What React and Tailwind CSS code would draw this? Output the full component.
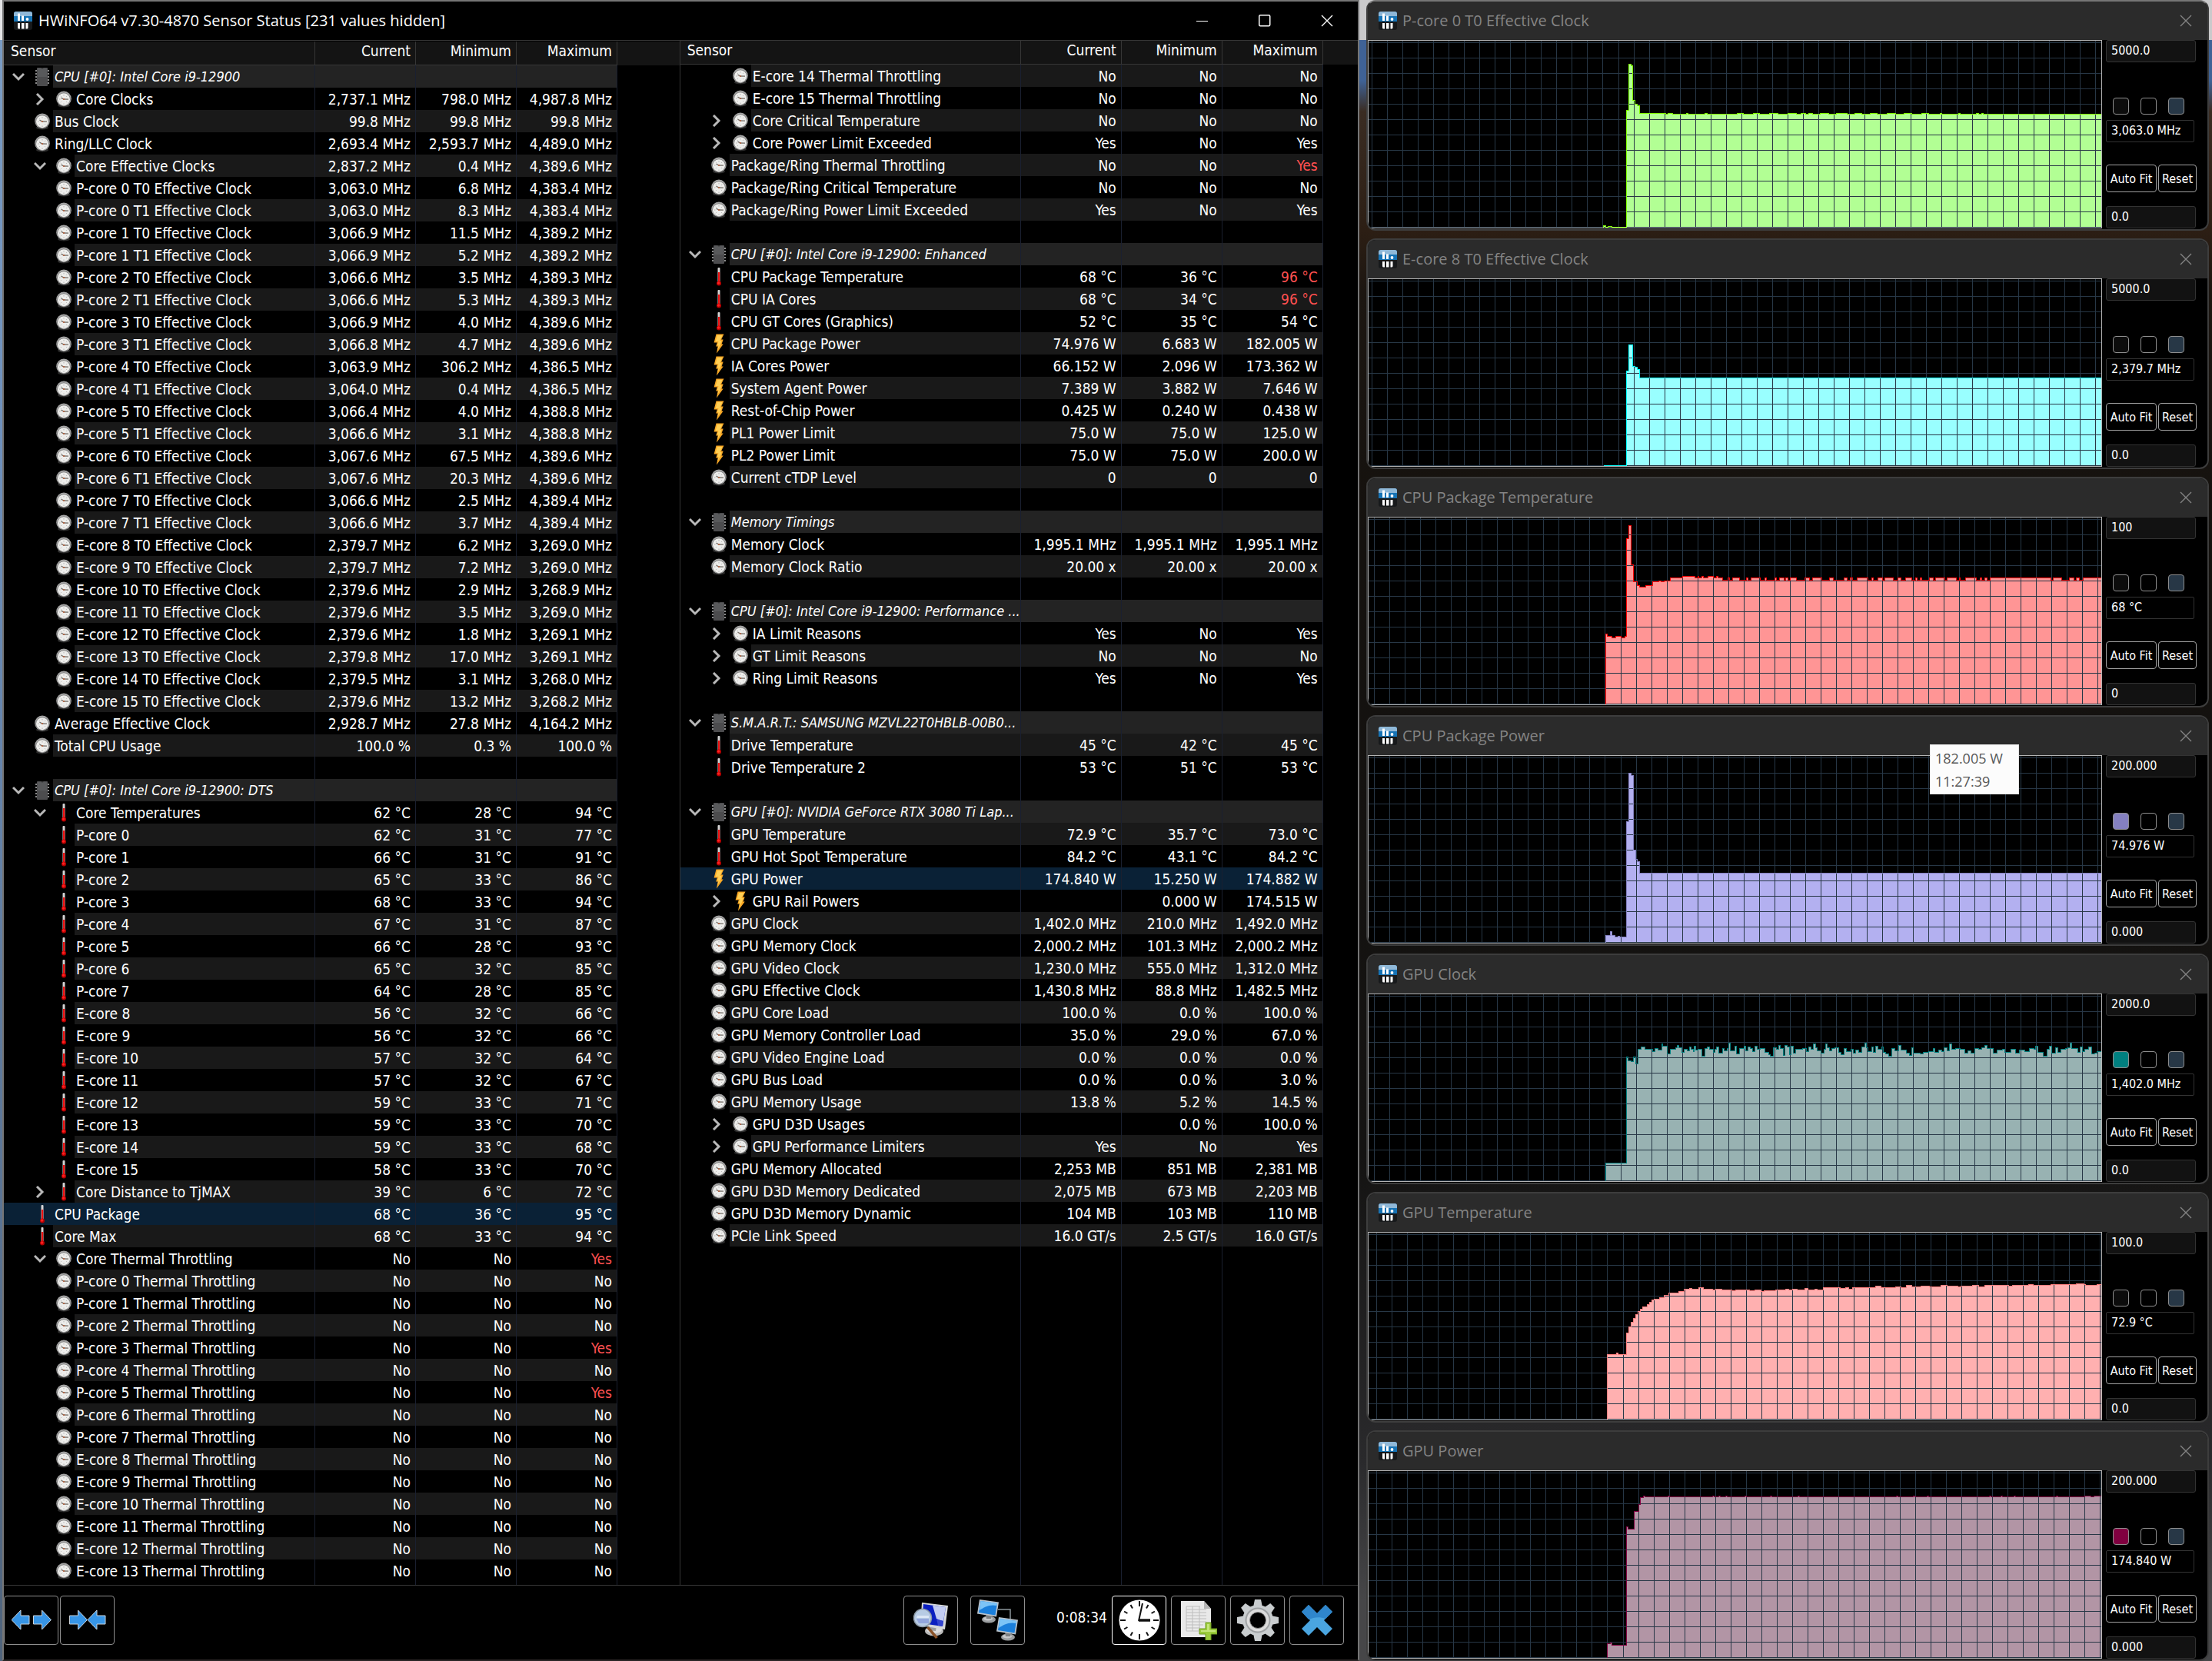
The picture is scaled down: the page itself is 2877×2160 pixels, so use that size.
import { useState } from 'react';
import clsx from 'clsx';

// [depth, icon, name, current, minimum, maximum, chevron]
// a leading "!" marks a value that is out of range
const effectiveClocks = [
  ['P-core 0 T0', '3,063.0', '6.8', '4,383.4'],
  ['P-core 0 T1', '3,063.0', '8.3', '4,383.4'],
  ['P-core 1 T0', '3,066.9', '11.5', '4,389.2'],
  ['P-core 1 T1', '3,066.9', '5.2', '4,389.2'],
  ['P-core 2 T0', '3,066.6', '3.5', '4,389.3'],
  ['P-core 2 T1', '3,066.6', '5.3', '4,389.3'],
  ['P-core 3 T0', '3,066.9', '4.0', '4,389.6'],
  ['P-core 3 T1', '3,066.8', '4.7', '4,389.6'],
  ['P-core 4 T0', '3,063.9', '306.2', '4,386.5'],
  ['P-core 4 T1', '3,064.0', '0.4', '4,386.5'],
  ['P-core 5 T0', '3,066.4', '4.0', '4,388.8'],
  ['P-core 5 T1', '3,066.6', '3.1', '4,388.8'],
  ['P-core 6 T0', '3,067.6', '67.5', '4,389.6'],
  ['P-core 6 T1', '3,067.6', '20.3', '4,389.6'],
  ['P-core 7 T0', '3,066.6', '2.5', '4,389.4'],
  ['P-core 7 T1', '3,066.6', '3.7', '4,389.4'],
  ['E-core 8 T0', '2,379.7', '6.2', '3,269.0'],
  ['E-core 9 T0', '2,379.7', '7.2', '3,269.0'],
  ['E-core 10 T0', '2,379.6', '2.9', '3,268.9'],
  ['E-core 11 T0', '2,379.6', '3.5', '3,269.0'],
  ['E-core 12 T0', '2,379.6', '1.8', '3,269.1'],
  ['E-core 13 T0', '2,379.8', '17.0', '3,269.1'],
  ['E-core 14 T0', '2,379.5', '3.1', '3,268.0'],
  ['E-core 15 T0', '2,379.6', '13.2', '3,268.2'],
].map(([core, ...v]) => [1, 'clock', `${core} Effective Clock`, ...v.map((n) => `${n} MHz`)]);

const coreTemps = [
  ['P-core 0', 62, 31, 77],
  ['P-core 1', 66, 31, 91],
  ['P-core 2', 65, 33, 86],
  ['P-core 3', 68, 33, 94],
  ['P-core 4', 67, 31, 87],
  ['P-core 5', 66, 28, 93],
  ['P-core 6', 65, 32, 85],
  ['P-core 7', 64, 28, 85],
  ['E-core 8', 56, 32, 66],
  ['E-core 9', 56, 32, 66],
  ['E-core 10', 57, 32, 64],
  ['E-core 11', 57, 32, 67],
  ['E-core 12', 59, 33, 71],
  ['E-core 13', 59, 33, 70],
  ['E-core 14', 59, 33, 68],
  ['E-core 15', 58, 33, 70],
].map(([core, ...v]) => [1, 'temp', core, ...v.map((n) => `${n} °C`)]);

const throttling = Array.from({ length: 14 }, (_, i) => [
  1,
  'clock',
  `${i < 8 ? 'P' : 'E'}-core ${i} Thermal Throttling`,
  'No',
  'No',
  i === 3 || i === 5 ? '!Yes' : 'No',
]);

const leftRows = [
  [0, 'chip', 'CPU [#0]: Intel Core i9-12900', '', '', '', 'open'],
  [1, 'clock', 'Core Clocks', '2,737.1 MHz', '798.0 MHz', '4,987.8 MHz', 'closed'],
  [0, 'clock', 'Bus Clock', '99.8 MHz', '99.8 MHz', '99.8 MHz'],
  [0, 'clock', 'Ring/LLC Clock', '2,693.4 MHz', '2,593.7 MHz', '4,489.0 MHz'],
  [1, 'clock', 'Core Effective Clocks', '2,837.2 MHz', '0.4 MHz', '4,389.6 MHz', 'open'],
  ...effectiveClocks,
  [0, 'clock', 'Average Effective Clock', '2,928.7 MHz', '27.8 MHz', '4,164.2 MHz'],
  [0, 'clock', 'Total CPU Usage', '100.0 %', '0.3 %', '100.0 %'],
  null,
  [0, 'chip', 'CPU [#0]: Intel Core i9-12900: DTS', '', '', '', 'open'],
  [1, 'temp', 'Core Temperatures', '62 °C', '28 °C', '94 °C', 'open'],
  ...coreTemps,
  [1, 'temp', 'Core Distance to TjMAX', '39 °C', '6 °C', '72 °C', 'closed'],
  [0, 'temp', 'CPU Package', '68 °C', '36 °C', '95 °C'],
  [0, 'temp', 'Core Max', '68 °C', '33 °C', '94 °C'],
  [1, 'clock', 'Core Thermal Throttling', 'No', 'No', '!Yes', 'open'],
  ...throttling,
];

const rightRows = [
  [1, 'clock', 'E-core 14 Thermal Throttling', 'No', 'No', 'No'],
  [1, 'clock', 'E-core 15 Thermal Throttling', 'No', 'No', 'No'],
  [1, 'clock', 'Core Critical Temperature', 'No', 'No', 'No', 'closed'],
  [1, 'clock', 'Core Power Limit Exceeded', 'Yes', 'No', 'Yes', 'closed'],
  [0, 'clock', 'Package/Ring Thermal Throttling', 'No', 'No', '!Yes'],
  [0, 'clock', 'Package/Ring Critical Temperature', 'No', 'No', 'No'],
  [0, 'clock', 'Package/Ring Power Limit Exceeded', 'Yes', 'No', 'Yes'],
  null,
  [0, 'chip', 'CPU [#0]: Intel Core i9-12900: Enhanced', '', '', '', 'open'],
  [0, 'temp', 'CPU Package Temperature', '68 °C', '36 °C', '!96 °C'],
  [0, 'temp', 'CPU IA Cores', '68 °C', '34 °C', '!96 °C'],
  [0, 'temp', 'CPU GT Cores (Graphics)', '52 °C', '35 °C', '54 °C'],
  [0, 'power', 'CPU Package Power', '74.976 W', '6.683 W', '182.005 W'],
  [0, 'power', 'IA Cores Power', '66.152 W', '2.096 W', '173.362 W'],
  [0, 'power', 'System Agent Power', '7.389 W', '3.882 W', '7.646 W'],
  [0, 'power', 'Rest-of-Chip Power', '0.425 W', '0.240 W', '0.438 W'],
  [0, 'power', 'PL1 Power Limit', '75.0 W', '75.0 W', '125.0 W'],
  [0, 'power', 'PL2 Power Limit', '75.0 W', '75.0 W', '200.0 W'],
  [0, 'clock', 'Current cTDP Level', '0', '0', '0'],
  null,
  [0, 'chip', 'Memory Timings', '', '', '', 'open'],
  [0, 'clock', 'Memory Clock', '1,995.1 MHz', '1,995.1 MHz', '1,995.1 MHz'],
  [0, 'clock', 'Memory Clock Ratio', '20.00 x', '20.00 x', '20.00 x'],
  null,
  [0, 'chip', 'CPU [#0]: Intel Core i9-12900: Performance ...', '', '', '', 'open'],
  [1, 'clock', 'IA Limit Reasons', 'Yes', 'No', 'Yes', 'closed'],
  [1, 'clock', 'GT Limit Reasons', 'No', 'No', 'No', 'closed'],
  [1, 'clock', 'Ring Limit Reasons', 'Yes', 'No', 'Yes', 'closed'],
  null,
  [0, 'chip', 'S.M.A.R.T.: SAMSUNG MZVL22T0HBLB-00B0...', '', '', '', 'open'],
  [0, 'temp', 'Drive Temperature', '45 °C', '42 °C', '45 °C'],
  [0, 'temp', 'Drive Temperature 2', '53 °C', '51 °C', '53 °C'],
  null,
  [0, 'chip', 'GPU [#0]: NVIDIA GeForce RTX 3080 Ti Lap...', '', '', '', 'open'],
  [0, 'temp', 'GPU Temperature', '72.9 °C', '35.7 °C', '73.0 °C'],
  [0, 'temp', 'GPU Hot Spot Temperature', '84.2 °C', '43.1 °C', '84.2 °C'],
  [0, 'power', 'GPU Power', '174.840 W', '15.250 W', '174.882 W'],
  [1, 'power', 'GPU Rail Powers', '', '0.000 W', '174.515 W', 'closed'],
  [0, 'clock', 'GPU Clock', '1,402.0 MHz', '210.0 MHz', '1,492.0 MHz'],
  [0, 'clock', 'GPU Memory Clock', '2,000.2 MHz', '101.3 MHz', '2,000.2 MHz'],
  [0, 'clock', 'GPU Video Clock', '1,230.0 MHz', '555.0 MHz', '1,312.0 MHz'],
  [0, 'clock', 'GPU Effective Clock', '1,430.8 MHz', '88.8 MHz', '1,482.5 MHz'],
  [0, 'clock', 'GPU Core Load', '100.0 %', '0.0 %', '100.0 %'],
  [0, 'clock', 'GPU Memory Controller Load', '35.0 %', '29.0 %', '67.0 %'],
  [0, 'clock', 'GPU Video Engine Load', '0.0 %', '0.0 %', '0.0 %'],
  [0, 'clock', 'GPU Bus Load', '0.0 %', '0.0 %', '3.0 %'],
  [0, 'clock', 'GPU Memory Usage', '13.8 %', '5.2 %', '14.5 %'],
  [1, 'clock', 'GPU D3D Usages', '', '0.0 %', '100.0 %', 'closed'],
  [1, 'clock', 'GPU Performance Limiters', 'Yes', 'No', 'Yes', 'closed'],
  [0, 'clock', 'GPU Memory Allocated', '2,253 MB', '851 MB', '2,381 MB'],
  [0, 'clock', 'GPU D3D Memory Dedicated', '2,075 MB', '673 MB', '2,203 MB'],
  [0, 'clock', 'GPU D3D Memory Dynamic', '104 MB', '103 MB', '110 MB'],
  [0, 'clock', 'PCIe Link Speed', '16.0 GT/s', '2.5 GT/s', '16.0 GT/s'],
];

const GRAPH_W = 955;
const GRAPH_H = 245;

// Short runs above a flat level, given as [from, to] pairs
const bumps = (level, top, runs) => runs.flatMap(([a, b]) => [[a, top], [b, level]]);

const trace = (points, scaleY, offsetY) =>
  points.map(([x, y]) => [Math.round(281 + x * 0.521), Math.round(y * scaleY - offsetY)]);

const clockP = [
  [306, 241], [309, 243], [312, 242], [317, 243], [336, 91], [339, 31], [342, 33], [344, 78], [347, 83], [350, 85], [353, 95],
  ...bumps(96, 95, [
    [354, 387], [390, 396], [414, 416], [438, 441], [480, 488], [501, 509], [522, 533], [546, 557], [563, 569],
    [573, 578], [588, 599], [609, 623], [633, 642], [653, 662], [675, 686], [697, 707], [720, 729], [744, 746],
    [768, 770], [791, 794], [798, 800],
  ]),
];

const clockE = [[306, 243], [336, 120], [339, 86], [344, 114], [347, 115], [350, 118], [353, 129]];

const cpuTemp = [
  [309, 152], [311, 155], [317, 157], [322, 155], [329, 157], [334, 155], [336, 28], [339, 11], [342, 62], [345, 84],
  [350, 89], [353, 91], [361, 89], [370, 84], [378, 83], [381, 84], [385, 83], [393, 79], [409, 77], [425, 79],
  [429, 77], [430, 79], [434, 77], [436, 79], [442, 77], [449, 79], [453, 77], [455, 79], [461, 82],
  ...bumps(82, 79, [
    [468, 470], [474, 483], [492, 494], [498, 510], [516, 518], [529, 531], [535, 541], [543, 546], [549, 557],
    [568, 574], [578, 590], [600, 605], [619, 623], [627, 630], [636, 650], [655, 657], [663, 669], [672, 683],
    [689, 693], [699, 707], [712, 714], [718, 720], [730, 735], [738, 750], [753, 765], [769, 770], [777, 791],
    [796, 798], [802, 805], [809, 888], [891, 902], [912, 918], [921, 925], [930, 955],
  ]),
];

const cpuPower = [
  [309, 234], [315, 229], [317, 234], [321, 236], [325, 235], [327, 236], [336, 86], [339, 23], [342, 26], [345, 123],
  [348, 135], [350, 138], [353, 153],
];

const gpuClock = trace([
  [53, 463], [106, 228], [110, 236], [117, 238], [123, 229], [128, 244], [135, 211], [142, 206], [151, 211],
  [170, 216], [177, 209], [184, 213], [193, 199], [196, 205], [207, 221], [215, 211], [228, 208], [232, 202],
  [236, 208], [243, 218], [250, 211], [257, 214], [262, 206], [266, 212], [272, 216], [275, 204], [278, 213],
  [284, 211], [294, 226], [302, 210], [308, 206], [312, 212], [322, 218], [327, 211], [331, 206], [336, 220],
  [345, 209], [349, 215], [357, 210], [361, 198], [364, 214], [376, 204], [380, 221], [388, 210], [399, 204],
  [403, 214], [408, 206], [414, 210], [420, 217], [427, 204], [432, 212], [440, 210], [452, 218], [460, 223],
  [465, 227], [472, 208], [480, 212], [485, 203], [490, 210], [497, 225], [500, 203], [506, 206], [513, 224],
  [516, 205], [522, 220], [527, 211], [545, 210], [554, 216], [560, 206], [566, 212], [572, 199], [577, 208],
  [582, 214], [591, 219], [599, 211], [602, 199], [606, 208], [612, 215], [618, 210], [625, 208], [635, 218],
  [642, 224], [648, 209], [655, 216], [666, 211], [672, 220], [677, 213], [686, 218], [692, 206], [700, 197],
  [704, 207], [709, 217], [717, 206], [722, 218], [728, 204], [733, 211], [742, 206], [747, 218], [752, 222],
  [760, 227], [768, 210], [776, 214], [785, 202], [791, 213], [805, 219], [812, 225], [817, 207], [822, 219],
  [838, 222], [846, 218], [860, 216], [872, 209], [876, 218], [884, 213], [892, 217], [899, 208], [905, 214],
  [912, 200], [917, 212], [928, 210], [938, 211], [950, 220], [957, 215], [966, 219], [975, 210], [985, 212],
  [993, 207], [1000, 202], [1006, 210], [1022, 219], [1030, 213], [1044, 212], [1050, 218], [1066, 212],
  [1076, 220], [1086, 213], [1100, 216], [1112, 209], [1122, 212], [1127, 204], [1132, 218], [1145, 226],
  [1155, 212], [1162, 205], [1167, 219], [1177, 208], [1183, 218], [1190, 212], [1202, 209], [1208, 207],
  [1213, 198], [1217, 209], [1232, 218], [1238, 206], [1243, 216], [1250, 212], [1260, 206], [1266, 222],
  [1275, 219], [1281, 216],
], 0.587, 52);

const gpuTemp = trace([
  [58, 887], [80, 885], [85, 887], [106, 840], [111, 826], [117, 816], [123, 807], [128, 799], [135, 792],
  [140, 787], [146, 782], [157, 776], [163, 772], [169, 767], [175, 765], [188, 761], [200, 756], [212, 751],
  [237, 748], [250, 743], [263, 741], [268, 743], [286, 740], [297, 742], [309, 743], [320, 745], [328, 743],
  [338, 742], [343, 744], [355, 745], [368, 746], [378, 744], [390, 745], [412, 747], [426, 745], [442, 748],
  [450, 746], [466, 747], [478, 744], [492, 745], [503, 742], [510, 744], [520, 742], [532, 744], [550, 741],
  [558, 744], [575, 742], [582, 744], [597, 740], [632, 739], [640, 741], [652, 740], [660, 743], [670, 739],
  [718, 740], [728, 736], [740, 740], [750, 739], [778, 737], [790, 739], [804, 735], [817, 738], [840, 736],
  [862, 738], [890, 734], [905, 736], [932, 738], [940, 736], [970, 735], [985, 737], [1000, 735], [1060, 736],
  [1070, 734], [1110, 732], [1120, 735], [1150, 734], [1165, 733], [1228, 731], [1248, 733], [1252, 735],
  [1272, 734], [1281, 732],
], 0.587, 362);

const gpuPower = [
  [311, 225], [315, 224], [317, 227], [336, 73], [338, 76], [346, 53], [352, 44], [354, 35], [358, 33], [360, 34],
  ...bumps(34, 33, [
    [390, 392], [448, 450], [456, 458], [465, 467], [490, 492], [523, 525], [559, 561], [687, 689], [709, 711],
    [727, 729], [808, 810], [823, 825], [840, 842], [895, 897], [932, 940], [944, 955],
  ]),
];

const graphs = [
  { title: 'P-core 0 T0 Effective Clock', max: '5000.0', min: '0.0', value: '3,063.0 MHz', grid: 5, data: clockP, fill: '#b2ff94', line: '#80ff00', swatch: 'bg-[#0c0c0c]' },
  { title: 'E-core 8 T0 Effective Clock', max: '5000.0', min: '0.0', value: '2,379.7 MHz', grid: 5, data: clockE, fill: '#99ffff', line: '#00ffff', swatch: 'bg-[#0c0c0c]' },
  { title: 'CPU Package Temperature', max: '100', min: '0', value: '68 °C', grid: 8, data: cpuTemp, fill: '#ff9595', line: '#ff0000', swatch: 'bg-[#0c0c0c]' },
  { title: 'CPU Package Power', max: '200.000', min: '0.000', value: '74.976 W', grid: 8, data: cpuPower, fill: '#b3b0f0', line: '#8480c0', swatch: 'bg-[#8480c0]', tip: ['182.005 W', '11:27:39'] },
  { title: 'GPU Clock', max: '2000.0', min: '0.0', value: '1,402.0 MHz', grid: 8, data: gpuClock, fill: '#98b2b2', line: '#008080', swatch: 'bg-[#008080]' },
  { title: 'GPU Temperature', max: '100.0', min: '0.0', value: '72.9 °C', grid: 11, data: gpuTemp, fill: '#ffb0b0', line: '#ff8080', swatch: 'bg-[#0c0c0c]' },
  { title: 'GPU Power', max: '200.000', min: '0.000', value: '174.840 W', grid: 11, data: gpuPower, fill: '#b295a5', line: '#800040', swatch: 'bg-[#800040]' },
];

const ClockIcon = () => (
  <svg viewBox="0 0 20 22" className="h-[22px] w-5">
    <ellipse cx="10" cy="19" rx="8" ry="2.5" fill="#2c2c2c" />
    <circle cx="10" cy="10.400" r="9.800" fill="#a4a4a4" />
    <circle cx="10" cy="11" r="8.600" fill="#6e6e6e" />
    <circle cx="10" cy="11.200" r="8" fill="#ededeb" />
    <path d="M10 5v1.500M10 16.500V18M4 11h1.500M5.800 6.800l1 1M14.200 15.200l-1-1M5.800 15.200l1-1M14.200 6.800l-1 1" stroke="#a5a5a5" strokeWidth=".8" />
    <path d="M6.500 9.200L10 11l6 .2" fill="none" stroke="#77716b" strokeWidth="1.300" />
    <circle cx="10" cy="11" r="1.100" fill="#b5603c" />
  </svg>
);

const ThermometerIcon = () => (
  <svg viewBox="0 0 8 24" className="h-6 w-2">
    <rect x="2.500" y="0" width="3" height="19" rx="1" fill="#d4d4d4" />
    <rect x="3" y="6" width="2.200" height="14" fill="#f01010" />
    <circle cx="4" cy="20.500" r="3" fill="#b40000" />
    <circle cx="3.600" cy="20" r="1.800" fill="#ff2020" />
  </svg>
);

const BoltIcon = () => (
  <svg viewBox="0 0 14 26" className="h-[26px] w-[14px]">
    <path d="M3.5.5h10l-3.4 7h2.6l-2.2 6h2.2L4 25.5l1.600-9H3.200l1.600-5H.6z" fill="#f9a825" />
    <path d="M5 2h6.500l-3.200 7h2.300l-2 6-3.200 6 1.200-6H4.800l1.700-5H2.600z" fill="#ffcf55" />
  </svg>
);

const ChipIcon = () => (
  <svg viewBox="0 0 20 24" className="h-6 w-5">
    <path d="M1 4h18M1 8h18M1 12h18M1 16h18M1 20h18" stroke="#b8b8b8" strokeWidth="1.6" />
    <rect x="3" y="0" width="14" height="24" rx="1" fill="#4c4c4e" />
    <rect x="4" y="1" width="12" height="11" fill="#58595b" />
    <path d="M8.500 0a1.500 1.500 0 0 0 3 0z" fill="#333" />
  </svg>
);

const icons = { clock: ClockIcon, temp: ThermometerIcon, power: BoltIcon, chip: ChipIcon };

const AppLogo = () => (
  <svg viewBox="0 0 24 24" className="size-6 shrink-0">
    <rect width="24" height="24" rx="3" fill="#17191b" />
    <path d="M3 0h18a3 3 0 0 1 3 3v10H0V3a3 3 0 0 1 3-3z" fill="#1673b5" />
    <path d="M3 0h18a3 3 0 0 1 3 3v3H0V3a3 3 0 0 1 3-3z" fill="#8fb8d8" />
    <path d="M5 2.500h3V12H5zM10 5.500h3V12h-3z" fill="#fff" />
    <circle cx="17.500" cy="10" r="1.900" fill="#fff" />
    <path d="M5 15h3v7.500H6.500A1.500 1.500 0 0 1 5 21zM10 15h3.500v7.500H10zM15.500 15h3v6a1.500 1.500 0 0 1-1.500 1.500h-1.500z" fill="#fff" />
  </svg>
);

const CloseGlyph = () => (
  <svg viewBox="0 0 16 16" className="size-4" fill="none" stroke="currentColor" strokeWidth="1.4">
    <path d="M1 1l14 14M15 1L1 15" />
  </svg>
);

const Chevron = ({ state }) => (
  <svg viewBox="0 0 16 16" className="size-4" fill="none" stroke="#b9b9b9" strokeWidth="3">
    <path d={state === 'open' ? 'M1 4l7 7 7-7' : 'M4 1l7 7-7 7'} />
  </svg>
);

const ValueCell = ({ value, className }) => {
  const alarm = value.startsWith('!');
  return (
    <td className={clsx('border-r border-[#1a2030] pt-px pr-[6px] text-right', className, alarm && 'text-[#ff5050]')}>
      {alarm ? value.slice(1) : value}
    </td>
  );
};

const SensorTable = ({ label, rows, selected, onSelect, firstCol }) => (
  <table aria-label={label} className="h-full w-full table-fixed border-separate border-spacing-0 whitespace-nowrap text-[19px]/[28px]">
    <colgroup>
      <col className={firstCol} />
      <col className="w-[131px]" />
      <col className="w-[131px]" />
      <col className="w-[131px]" />
      <col />
    </colgroup>
    <thead>
      <tr className="h-[31px] bg-[#141414] leading-6">
        <th className="border-r border-b border-[#363636] pb-[6px] pl-[9px] text-left font-normal">Sensor</th>
        {['Current', 'Minimum', 'Maximum'].map((h) => (
          <th key={h} className="border-r border-b border-[#363636] pr-[6px] pb-[6px] text-right font-normal">{h}</th>
        ))}
        <td />
      </tr>
    </thead>
    <tbody>
      {rows.map((row, i) => {
        if (!row) {
          return (
            <tr key={i} className="h-[29px]">
              {[0, 1, 2, 3].map((c) => <td key={c} className="border-r border-[#1a2030]" />)}
              <td />
            </tr>
          );
        }
        const [depth, icon, name, current, minimum, maximum, chevron] = row;
        const Icon = icons[icon];
        const group = icon === 'chip';
        const active = selected === name;
        const shade = active ? 'bg-[#0a2136]' : group ? 'bg-[#232323]' : i % 2 === 0 ? 'bg-[#191919]' : '';
        return (
          <tr key={i} className="h-[29px]" onClick={() => onSelect(name)}>
            <td className={clsx('border-r border-[#1a2030] p-0', active && 'bg-[#0a2136]')}>
              <div className={clsx('flex h-[29px] items-center', depth ? 'pl-8' : 'pl-1')}>
                <div className="flex w-8 shrink-0 justify-center pr-[2px]">
                  {chevron && (
                    <button aria-label={`Toggle ${name}`} className="flex">
                      <Chevron state={chevron} />
                    </button>
                  )}
                </div>
                <div className="flex w-7 shrink-0 justify-center"><Icon /></div>
                <div className={clsx('h-[29px] min-w-0 flex-1 pt-px pl-[2px]', shade, group && 'text-[18px]/[28px] italic')}>{name}</div>
              </div>
            </td>
            <ValueCell value={current} className={shade} />
            <ValueCell value={minimum} className={shade} />
            <ValueCell value={maximum} className={shade} />
            <td />
          </tr>
        );
      })}
      <tr>
        {[0, 1, 2, 3].map((c) => <td key={c} className="border-r border-[#1a2030] p-0" />)}
        <td />
      </tr>
    </tbody>
  </table>
);

const ToolButton = ({ label, active, children }) => (
  <button
    aria-label={label}
    className={clsx('flex h-16 w-[71px] items-center justify-center rounded-[4px] border', active ? 'border-white' : 'border-[#8e8e8e]')}
  >
    {children}
  </button>
);

const arrowLeft = 'M0 12.500L12 0v7h11v11H12v7z';
const arrowRight = 'M23 12.500L11 0v7H0v11h11v7z';

const ExpandIcon = () => (
  <svg viewBox="0 0 52 26" className="h-[26px] w-[52px]" fill="#3795e6" stroke="#c9d2da" strokeWidth="1">
    <path d={arrowLeft} />
    <path d={arrowRight} transform="translate(28.500 0)" />
  </svg>
);

const CollapseIcon = () => (
  <svg viewBox="0 0 48 26" className="h-[26px] w-12" fill="#3795e6" stroke="#c9d2da" strokeWidth="1">
    <path d={arrowRight} transform="translate(.5 0)" />
    <path d={arrowLeft} transform="translate(24 0)" />
  </svg>
);

const InspectIcon = () => (
  <svg viewBox="0 0 46 48" className="h-12 w-[46px]">
    <ellipse cx="27" cy="38" rx="12" ry="6.500" fill="#b9b9b9" />
    <ellipse cx="27" cy="36.500" rx="10" ry="4.500" fill="#dcdcdc" />
    <path d="M21 31l9 1-1 6-9-1z" fill="#9d9d9d" />
    <path d="M11 1l34 4-4 31-32-5z" fill="#d6d8da" />
    <path d="M13 3l29 4-4 25-27-4z" fill="#0b1fc0" />
    <path d="M25 4.800l17 2.200-3 18c-5-1-7-2-9-3z" fill="#c3cdf2" />
    <path d="M30 22c2 1 4 2 9 3l-1 7-6-1z" fill="#3344cf" />
    <path d="M20 32l12 14-3 2-12-14z" fill="#8a5228" />
    <circle cx="12" cy="21" r="11.500" fill="#b7cbe4" stroke="#8d9aa6" strokeWidth="1.500" />
    <path d="M5 18h15v3H4z" fill="#dbe6f5" />
    <path d="M4 22h16v6H7z" fill="#93a6dc" />
  </svg>
);

const Monitor = ({ x, y }) => (
  <g transform={`translate(${x} ${y})`}>
    <ellipse cx="15" cy="26" rx="9" ry="4.500" fill="#9b9ea0" />
    <ellipse cx="14" cy="25" rx="6" ry="2.500" fill="#c6c8ca" />
    <path d="M11 19h8l-1 6h-6z" fill="#7d7f81" />
    <path d="M3 0l25 3.500-3 19L0 18.500z" fill="#b9c3cc" />
    <path d="M4.500 2l21.500 3-2.500 15.500L2 17z" fill="#1b7fdb" />
    <path d="M4.500 2l21.500 3-.5 3C16 6 9 10 3 14z" fill="#7cc4f7" />
  </g>
);

const NetworkIcon = () => (
  <svg viewBox="0 0 54 54" className="size-[54px]">
    <path d="M27 13h16v12" fill="none" stroke="#8b959b" strokeWidth="1.500" />
    <Monitor x={0} y={0} />
    <Monitor x={25} y={23} />
  </svg>
);

const BigClockIcon = () => (
  <svg viewBox="0 0 54 54" className="size-[54px]">
    <circle cx="27" cy="27" r="26.500" fill="#fff" />
    <g stroke="#111" strokeWidth="2">
      {Array.from({ length: 12 }, (_, i) => (
        <path key={i} d={i % 3 ? 'M27 4v5' : 'M27 2v7'} transform={`rotate(${i * 30} 27 27)`} />
      ))}
      <path d="M26 28l5-23" />
      <path d="M26 27h15" strokeWidth="3.500" />
    </g>
  </svg>
);

const ReportIcon = () => (
  <svg viewBox="0 0 48 52" className="h-[52px] w-12">
    <path d="M1 1h30l9 10v37H1z" fill="#e9e9e9" />
    <path d="M31 1v10h9z" fill="#b5b5b5" />
    <path d="M8 8h18M8 12h26M8 16h26M8 20h26M8 24h26M8 28h26M8 32h22M8 36h18M8 40h16M8 8v32M16 8v32M25 8v32" stroke="#bdbdbd" strokeWidth="1" />
    <path d="M33 29h7v8h8v7h-8v8h-7v-8h-8v-7h8z" fill="#9ccc3c" stroke="#6f9b22" strokeWidth="1" />
    <path d="M35 31h3v8h8v2H27v-2h8z" fill="#c5e57c" />
  </svg>
);

const GearIcon = () => (
  <svg viewBox="0 0 54 54" className="size-[54px]">
    <g fill="#c9cdcf">
      {Array.from({ length: 8 }, (_, i) => (
        <path key={i} d="M23 0h8l2 10H21z" transform={`rotate(${i * 45} 27 27)`} />
      ))}
      <circle cx="27" cy="27" r="20" />
    </g>
    <circle cx="27" cy="27" r="16.500" fill="#9fa2a4" />
    <circle cx="27" cy="27" r="14.500" fill="#dcdcdc" />
    <circle cx="27" cy="27" r="10.500" fill="#000" stroke="#8a8a8a" strokeWidth="1" />
  </svg>
);

const ExitIcon = () => (
  <svg viewBox="0 0 40 40" className="size-10">
    <path d="M9 0l11 11L31 0l9 9-11 11 11 11-9 9-11-11L9 40l-9-9 11-11L0 9z" fill="#4aa5e0" />
    <path d="M9 0l11 11L31 0l9 9-9 9c-8-3-15-2-22 1L0 9z" fill="#2f86cc" />
  </svg>
);

const Graph = ({ title, grid, data, fill, line }) => {
  const base = 243;
  let top = `M${data[0][0]} ${base}`;
  data.forEach(([x, y]) => {
    top += `H${x}V${y}`;
  });
  top += `H${GRAPH_W}`;
  const xs = Array.from({ length: 48 }, (_, i) => grid + i * 20 + (i > 15 ? 1 : 0)).filter((x) => x < GRAPH_W);
  return (
    <svg
      role="img"
      aria-label={`${title} history`}
      viewBox={`0 0 ${GRAPH_W} ${GRAPH_H}`}
      preserveAspectRatio="none"
      shapeRendering="crispEdges"
      className="absolute inset-0 h-full w-full"
    >
      <path d={`${top}V${base}z`} fill={fill} />
      <g fill="#273746">
        {xs.map((x) => <rect key={x} x={x} y="0" width="1" height={GRAPH_H} />)}
        {Array.from({ length: 13 }, (_, i) => <rect key={i} x="0" y={3 + i * 20} width={GRAPH_W} height="1" />)}
      </g>
      <path d={top} fill="none" stroke={line} strokeWidth="1" transform="translate(.5 .5)" />
      <rect x=".5" y=".5" width={GRAPH_W - 1} height={GRAPH_H - 1} fill="none" stroke="#b4b4b4" />
    </svg>
  );
};

const LimitInput = ({ label, value }) => (
  <input
    aria-label={label}
    defaultValue={value}
    className="block h-[29px] w-[117px] rounded-[3px] border border-[#333] bg-[#121212] pb-[3px] pl-[6px] outline-none"
  />
);

const GraphWindow = ({ graph }) => (
  <section className="relative flex min-h-0 flex-1 flex-col overflow-hidden rounded-[12px] border-2 border-[#3d3d3d] bg-black first:border-t-[#757575]">
    <header className="flex h-[50px] shrink-0 items-center bg-[#2b2b2b] pr-5 pl-[14px] text-[#848484]">
      <AppLogo />
      <h2 className="ml-[7px] flex-1 font-['Open_Sans',sans-serif] text-[20px]">{graph.title}</h2>
      <button aria-label={`Close ${graph.title}`}><CloseGlyph /></button>
    </header>
    <div className="flex min-h-0 flex-1 pb-px">
      <div className="relative min-w-0 flex-1">
        <Graph {...graph} />
      </div>
      <div className="flex w-[137px] shrink-0 flex-col pl-[5px] text-[16px]/[20px]">
        <LimitInput label={`${graph.title} maximum`} value={graph.max} />
        <div className="mt-auto flex gap-[15px] pl-[9px]">
          <button aria-label="Line color" className={clsx('h-[22px] w-[21px] rounded-[4px] border border-[#8e8e8e]', graph.swatch)} />
          <button aria-label="Background color" className="h-[22px] w-[21px] rounded-[4px] border border-[#8e8e8e] bg-black" />
          <button aria-label="Grid color" className="h-[22px] w-[21px] rounded-[4px] border border-[#8e8e8e] bg-[#273746]" />
        </div>
        <output className="mt-[7px] h-[29px] w-[115px] rounded-[2px] border border-[#333] pt-[3px] pl-[6px]">{graph.value}</output>
        <div className="mt-[29px] flex gap-[2px]">
          <button className="h-9 w-[66px] rounded-[4px] border border-[#a0a0a0] pt-px whitespace-nowrap">Auto Fit</button>
          <button className="h-9 w-[50px] rounded-[4px] border border-[#a0a0a0] pt-px whitespace-nowrap">Reset</button>
        </div>
        <div className="mt-[18px]">
          <LimitInput label={`${graph.title} minimum`} value={graph.min} />
        </div>
      </div>
    </div>
    {graph.tip && (
      <div role="tooltip" className="absolute top-9 right-[245px] h-[65px] w-[116px] border border-[#e5e5e5] bg-[#fcfcfc] pt-[2px] pl-[6px] font-['Open_Sans',sans-serif] text-[18px]/[30px] text-[#575757]">
        {graph.tip.map((t) => <div key={t}>{t}</div>)}
      </div>
    )}
  </section>
);

const App = () => {
  const [leftSelected, setLeftSelected] = useState('CPU Package');
  const [rightSelected, setRightSelected] = useState('GPU Power');

  return (
    <div className="flex min-h-screen bg-[linear-gradient(#c9c9cb_0,#c9c9cb_52px,#3f6296_52px,#3f6296_105px,#3a2c22_145px,#2c1e14_300px,#1c1611_380px,#14110e_700px,#141312_1500px,#2a2a2c_1900px,#464648_2080px)] font-['DejaVu_Sans_Condensed','DejaVu_Sans',sans-serif] text-white">
      <div className="w-[3px] shrink-0 bg-[linear-gradient(#e4e4e6_0,#e4e4e6_52px,#7a9cc4_52px,#6d8fbb_600px,#50647c_2140px)]" />
      <main className="flex min-w-0 flex-1 flex-col border-x-2 border-t-2 border-b-2 border-[#757575] border-b-[#2a2626] bg-black">
        <header className="flex h-[50px] shrink-0 items-center pr-8 pl-[13px]">
          <AppLogo />
          <h1 className="ml-2 flex-1 font-['Open_Sans',sans-serif] text-[20px]">HWiNFO64 v7.30-4870 Sensor Status [231 values hidden]</h1>
          <div className="flex gap-[65px]">
            <button aria-label="Minimize">
              <svg viewBox="0 0 16 16" className="size-4"><path d="M0 8.500h15" stroke="#fff" /></svg>
            </button>
            <button aria-label="Maximize">
              <svg viewBox="0 0 16 16" className="size-4"><rect x=".75" y=".75" width="14" height="14" rx="1.500" fill="none" stroke="#fff" strokeWidth="1.500" /></svg>
            </button>
            <button aria-label="Close"><CloseGlyph /></button>
          </div>
        </header>
        <div className="grid flex-1 grid-cols-[499fr_501fr] border-y border-[#363636]">
          <div className="pt-px">
            <SensorTable label="CPU sensors" rows={leftRows} selected={leftSelected} onSelect={setLeftSelected} firstCol="w-[405px]" />
          </div>
          <div className="border-l border-[#363636]">
            <SensorTable label="System sensors" rows={rightRows} selected={rightSelected} onSelect={setRightSelected} firstCol="w-[443px]" />
          </div>
        </div>
        <footer className="flex h-24 shrink-0 items-start justify-between pt-[13px] pr-[18px]">
          <div className="flex gap-[2px]">
            <ToolButton label="Expand columns"><ExpandIcon /></ToolButton>
            <ToolButton label="Shrink columns"><CollapseIcon /></ToolButton>
          </div>
          <div className="flex items-start">
            <div className="flex gap-4">
              <ToolButton label="Summary"><InspectIcon /></ToolButton>
              <ToolButton label="Remote monitoring"><NetworkIcon /></ToolButton>
            </div>
            <time className="w-[113px] pt-[14px] pr-[6px] text-right text-[19px]/[28px]">0:08:34</time>
            <div className="flex gap-[6px]">
              <ToolButton label="Reset timer" active><BigClockIcon /></ToolButton>
              <ToolButton label="Start logging"><ReportIcon /></ToolButton>
              <ToolButton label="Settings"><GearIcon /></ToolButton>
              <ToolButton label="Close sensors"><ExitIcon /></ToolButton>
            </div>
          </div>
        </footer>
      </main>
      <aside className="mr-1 ml-[9px] flex w-[1096px] shrink-0 flex-col gap-[10px]">
        {graphs.map((g) => <GraphWindow key={g.title} graph={g} />)}
      </aside>
    </div>
  );
};

export default App;
